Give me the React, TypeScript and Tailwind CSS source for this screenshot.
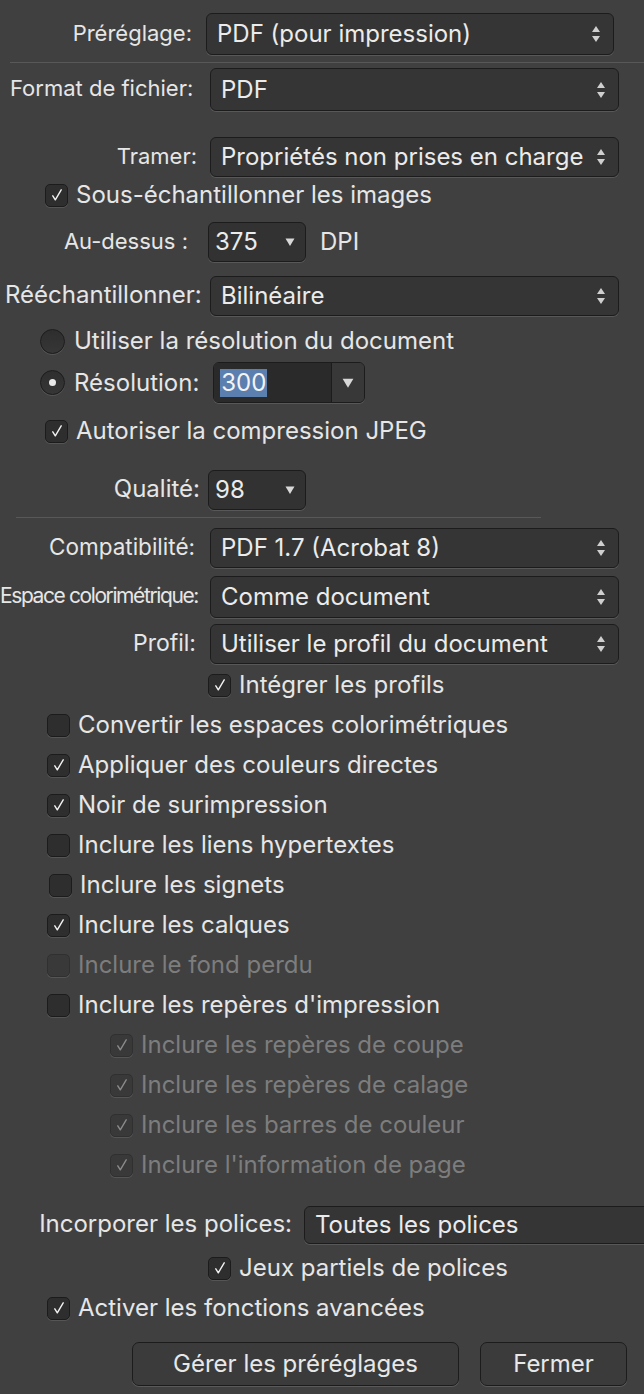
import React from 'react';

const font = { fontFamily: 'Inter, "Liberation Sans", sans-serif' };

// Up/down stepper arrows used by pop-up buttons
const UpDown = () => (
  <svg width="10" height="18" viewBox="0 0 10 18" className="shrink-0">
    <path d="M5 1 L9 7 L1 7 Z" fill="#cfcfcf" />
    <path d="M5 17 L9 11 L1 11 Z" fill="#cfcfcf" />
  </svg>
);

const Down = ({ size = 10 }: { size?: number }) => (
  <svg width={size} height={size} viewBox="0 0 10 10" className="shrink-0">
    <path d="M0.5 1.5 L9.5 1.5 L5 9 Z" fill="#d8d8d8" />
  </svg>
);

const Popup = ({ value, className = '', noArrow = false }: { value: string; className?: string; noArrow?: boolean }) => (
  <div
    className={`flex shrink-0 items-center justify-between rounded-[6px] border border-[#1c1c1c] bg-[#353535] pl-[10px] pr-[12px] shadow-[0_1px_0_#585858] ${className}`}
  >
    <span className="text-[24px] text-[#ebebeb] whitespace-nowrap leading-none">{value}</span>
    {!noArrow && <UpDown />}
  </div>
);

const Combo = ({ value, className = '' }: { value: string; className?: string }) => (
  <div
    className={`flex shrink-0 items-center justify-between rounded-[6px] border border-[#1c1c1c] bg-[#323232] pl-[6px] pr-[10px] shadow-[0_1px_0_#585858] ${className}`}
  >
    <span className="text-[24px] text-[#ebebeb] leading-none">{value}</span>
    <Down />
  </div>
);

const Check = ({ checked, disabled = false }: { checked: boolean; disabled?: boolean }) => (
  <div
    className={`flex h-[23px] w-[23px] shrink-0 items-center justify-center rounded-[5px] border ${
      disabled ? 'border-[#303030] bg-[#393939]' : 'border-[#1c1c1c] bg-[#2e2e2e]'
    } shadow-[0_1px_0_#555]`}
  >
    {checked && (
      <svg width="14" height="14" viewBox="0 0 14 14">
        <path
          d="M2.8 7.8 L5.3 11.8 L11.2 1.8"
          fill="none"
          stroke={disabled ? '#8a8a8a' : '#f2f2f2'}
          strokeWidth="1.4"
          strokeLinecap="round"
          strokeLinejoin="round"
        />
      </svg>
    )}
  </div>
);

const CheckRow = ({
  label,
  checked,
  disabled = false,
  indent,
  className = '',
}: {
  label: string;
  checked: boolean;
  disabled?: boolean;
  indent: string;
  className?: string;
}) => (
  <div className={`flex items-center gap-[8px] ${indent} ${className}`}>
    <Check checked={checked} disabled={disabled} />
    <span className={`text-[24px] leading-none whitespace-nowrap ${disabled ? 'text-[#7d7d7d]' : 'text-[#e6e6e6]'}`}>
      {label}
    </span>
  </div>
);

const Radio = ({ on }: { on: boolean }) => (
  <div className="flex h-[25px] w-[25px] shrink-0 items-center justify-center rounded-full border border-[#1c1c1c] bg-gradient-to-b from-[#2e2e2e] to-[#363636] shadow-[0_1px_0_#555]">
    {on && <div className="h-[7px] w-[7px] rounded-full bg-[#e8e8e8]" />}
  </div>
);

const Label = ({ children, className = 'text-[22px]' }: { children: React.ReactNode; className?: string }) => (
  <span className={`text-[#e6e6e6] leading-none whitespace-nowrap ${className}`}>{children}</span>
);

export default function App() {
  return (
    <div className="w-[644px] h-[1394px] overflow-hidden bg-[#404040] pt-[13px]" style={font}>
      {/* Préréglage */}
      <div className="flex h-[42px] items-center">
        <div className="w-[192px] shrink-0 text-right">
          <Label>Préréglage:</Label>
        </div>
        <Popup value="PDF (pour impression)" className="ml-[14px] h-[42px] w-[408px]" />
      </div>

      <div className="ml-[10px] mt-[7px] h-px bg-[#585858]" />

      {/* Format */}
      <div className="mt-[5px] flex h-[43px] items-center">
        <div className="w-[197px] shrink-0 pl-[10px]">
          <Label>Format de fichier:</Label>
        </div>
        <Popup value="PDF" className="ml-[13px] h-[43px] w-[409px]" />
      </div>

      {/* Tramer */}
      <div className="mt-[26px] flex h-[40px] items-center">
        <div className="w-[197px] shrink-0 text-right">
          <Label>Tramer:</Label>
        </div>
        <Popup value="Propriétés non prises en charge" className="ml-[13px] h-[40px] w-[409px]" />
      </div>

      <CheckRow label="Sous-échantillonner les images" checked indent="ml-[45px]" className="mt-[6px] h-[24px]" />

      {/* Au-dessus */}
      <div className="mt-[15px] flex h-[40px] items-center">
        <div className="w-[188px] shrink-0 text-right">
          <Label className="text-[22px]">Au-dessus :</Label>
        </div>
        <Combo value="375" className="ml-[20px] h-[40px] w-[98px]" />
        <Label className="ml-[14px] text-[24px]">DPI</Label>
      </div>

      {/* Rééchantillonner */}
      <div className="mt-[14px] flex h-[40px] items-center">
        <div className="w-[203px] shrink-0 pl-[5px]">
          <Label className="text-[24px]">Rééchantillonner:</Label>
        </div>
        <Popup value="Bilinéaire" className="ml-[7px] h-[40px] w-[409px]" />
      </div>

      <div className="ml-[40px] mt-[12px] flex h-[26px] items-center gap-[9px]">
        <Radio on={false} />
        <Label className="text-[24px]">Utiliser la résolution du document</Label>
      </div>

      <div className="mt-[8px] flex h-[41px] items-center">
        <div className="ml-[40px] flex shrink-0 items-center gap-[9px]">
          <Radio on />
          <Label className="text-[24px]">Résolution:</Label>
        </div>
        <div className="ml-[14px] flex h-[41px] w-[152px] shrink-0 overflow-hidden rounded-[6px] border border-[#1c1c1c] shadow-[0_1px_0_#585858]">
          <div className="flex flex-1 items-center bg-[#2a2a2a] pl-[6px]">
            <span className="bg-[#5b7faf] px-[1px] text-[24px] leading-[28px] text-[#f4f4f4]">300</span>
          </div>
          <div className="flex w-[33px] items-center justify-center border-l border-[#1c1c1c] bg-[#383838]">
            <Down size={12} />
          </div>
        </div>
      </div>

      <CheckRow label="Autoriser la compression JPEG" checked indent="ml-[45px]" className="mt-[16px] h-[24px]" />

      {/* Qualité */}
      <div className="mt-[27px] flex h-[40px] items-center">
        <div className="w-[200px] shrink-0 text-right">
          <Label className="text-[24px]">Qualité:</Label>
        </div>
        <Combo value="98" className="ml-[8px] h-[40px] w-[98px]" />
      </div>

      <div className="ml-[16px] mt-[7px] h-px w-[525px] bg-[#585858]" />

      {/* Compatibilité */}
      <div className="mt-[10px] flex h-[40px] items-center">
        <div className="w-[195px] shrink-0 text-right">
          <Label className="text-[22.5px]">Compatibilité:</Label>
        </div>
        <Popup value="PDF 1.7 (Acrobat 8)" className="ml-[15px] h-[40px] w-[409px]" />
      </div>

      <div className="mt-[8px] flex h-[42px] items-center">
        <div className="w-[198px] shrink-0">
          <Label className="text-[21px] tracking-[-1.4px]">Espace colorimétrique:</Label>
        </div>
        <Popup value="Comme document" className="ml-[12px] h-[42px] w-[409px]" />
      </div>

      <div className="mt-[6px] flex h-[40px] items-center">
        <div className="w-[196px] shrink-0 text-right">
          <Label className="text-[23px]">Profil:</Label>
        </div>
        <Popup value="Utiliser le profil du document" className="ml-[14px] h-[40px] w-[409px]" />
      </div>

      <CheckRow label="Intégrer les profils" checked indent="ml-[208px]" className="mt-[9px] h-[24px]" />

      <div className="mt-[8px] flex flex-col">
        <CheckRow label="Convertir les espaces colorimétriques" checked={false} indent="ml-[47px]" className="h-[40px]" />
        <CheckRow label="Appliquer des couleurs directes" checked indent="ml-[47px]" className="h-[40px]" />
        <CheckRow label="Noir de surimpression" checked indent="ml-[47px]" className="h-[40px]" />
        <CheckRow label="Inclure les liens hypertextes" checked={false} indent="ml-[47px]" className="h-[40px]" />
        <CheckRow label="Inclure les signets" checked={false} indent="ml-[49px]" className="h-[40px]" />
        <CheckRow label="Inclure les calques" checked indent="ml-[47px]" className="h-[40px]" />
        <CheckRow label="Inclure le fond perdu" checked={false} disabled indent="ml-[47px]" className="h-[40px]" />
        <CheckRow label="Inclure les repères d'impression" checked={false} indent="ml-[47px]" className="h-[40px]" />
        <CheckRow label="Inclure les repères de coupe" checked disabled indent="ml-[110px]" className="h-[40px]" />
        <CheckRow label="Inclure les repères de calage" checked disabled indent="ml-[110px]" className="h-[40px]" />
        <CheckRow label="Inclure les barres de couleur" checked disabled indent="ml-[110px]" className="h-[40px]" />
        <CheckRow label="Inclure l'information de page" checked disabled indent="ml-[110px]" className="h-[40px]" />
      </div>

      {/* Incorporer les polices */}
      <div className="mt-[21px] flex h-[38px] items-center">
        <div className="w-[292px] shrink-0 text-right">
          <Label className="text-[24px]">Incorporer les polices:</Label>
        </div>
        <Popup value="Toutes les polices" noArrow className="ml-[12px] h-[38px] w-[420px]" />
      </div>

      <CheckRow label="Jeux partiels de polices" checked indent="ml-[208px]" className="mt-[12px] h-[24px]" />
      <CheckRow label="Activer les fonctions avancées" checked indent="ml-[47px]" className="mt-[16px] h-[24px]" />

      <div className="mt-[22px] flex h-[44px] items-center">
        <button className="ml-[132px] h-[44px] w-[327px] rounded-[7px] border border-[#1c1c1c] bg-[#3b3b3b] text-[24px] text-[#e8e8e8] shadow-[0_1px_0_#5a5a5a]">
          Gérer les préréglages
        </button>
        <button className="ml-[21px] h-[44px] w-[147px] rounded-[7px] border border-[#1c1c1c] bg-[#3b3b3b] text-[24px] text-[#e8e8e8] shadow-[0_1px_0_#5a5a5a]">
          Fermer
        </button>
      </div>
    </div>
  );
}
